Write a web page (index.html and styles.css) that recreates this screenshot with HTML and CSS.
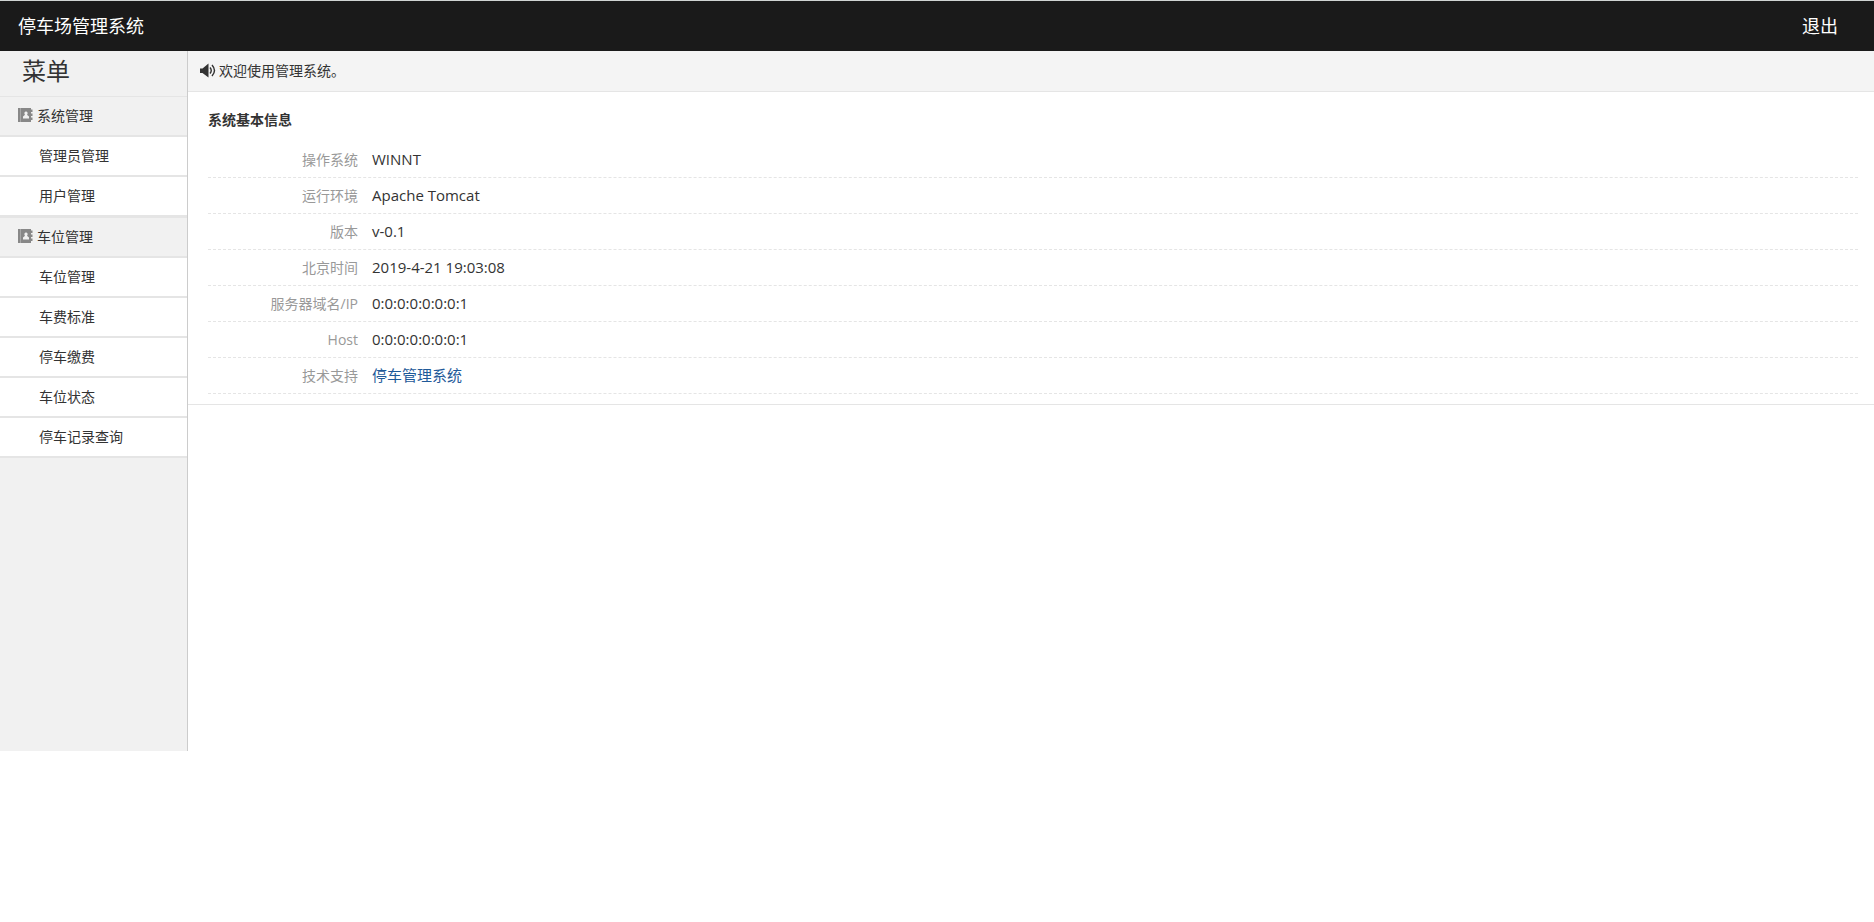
FILE: index.html
```html
<!DOCTYPE html>
<html lang="zh-CN">
<head>
  <meta charset="UTF-8">
  <meta name="viewport" content="width=device-width,initial-scale=1.0">
  <title>停车场管理系统</title>
  <link rel="stylesheet" href="styles.css">
</head>
<body>
    <svg class="sprite">
        <symbol id="icon_book" viewBox="0 0 16 16">
            <path fill-rule="evenodd" d="M1 0h13v1.500h1.500V4H14v1.500h1.500V8H14v1.500h1.500V12H14v2H1zM3.700 0v14h.3V0zM9 3.500a1.600 1.600 0 0 0-1.200 2.700V7L6 8.500V10.500h6V8.500L10.200 7V6.200A1.600 1.600 0 0 0 9 3.500z"/>
        </symbol>
        <symbol id="icon_sound" viewBox="0 0 16 16">
            <path d="M0 5.500h2.500L8.500.500v14L2.500 10H0z"/>
            <path d="M10 4.500q2.500 3 0 6M12 2q5 5.500 0 11" fill="none" stroke="currentColor" stroke-width="1.400"/>
        </symbol>
    </svg>

    <header class="topbar">
        <div class="logo">停车场管理系统</div>
        <a class="logout" href="#">退出</a>
    </header>

    <div class="container">
        <nav class="sidebar">
            <h1>菜单</h1>
            <div class="group">
                <a class="group-title" href="#"><svg class="icon"><use href="#icon_book"/></svg>系统管理</a>
                <ul>
                    <li><a href="#">管理员管理</a></li>
                    <li><a href="#">用户管理</a></li>
                </ul>
            </div>
            <div class="group">
                <a class="group-title" href="#"><svg class="icon"><use href="#icon_book"/></svg>车位管理</a>
                <ul>
                    <li><a href="#">车位管理</a></li>
                    <li><a href="#">车费标准</a></li>
                    <li><a href="#">停车缴费</a></li>
                    <li><a href="#">车位状态</a></li>
                    <li><a href="#">停车记录查询</a></li>
                </ul>
            </div>
        </nav>

        <main class="main">
            <div class="notice"><svg class="icon"><use href="#icon_sound"/></svg>欢迎使用管理系统。</div>
            <section class="info">
                <h2>系统基本信息</h2>
                <dl>
                    <div class="row"><dt>操作系统</dt><dd>WINNT</dd></div>
                    <div class="row"><dt>运行环境</dt><dd>Apache Tomcat</dd></div>
                    <div class="row"><dt>版本</dt><dd>v-0.1</dd></div>
                    <div class="row"><dt>北京时间</dt><dd>2019-4-21 19:03:08</dd></div>
                    <div class="row"><dt>服务器域名/IP</dt><dd>0:0:0:0:0:0:0:1</dd></div>
                    <div class="row"><dt>Host</dt><dd>0:0:0:0:0:0:0:1</dd></div>
                    <div class="row"><dt>技术支持</dt><dd><a href="#">停车管理系统</a></dd></div>
                </dl>
            </section>
        </main>
    </div>
</body>
</html>
```
FILE: styles.css
```css
* {
    box-sizing: border-box;
}
body {
    margin: 0;
    background: #fff;
    color: #333;
    font-family: "Open Sans", "Noto Sans CJK SC", sans-serif;
    font-size: 14px;
}
h1, h2, ul, dl, dd {
    margin: 0;
    padding: 0;
}
ul {
    list-style: none;
}
a {
    color: #333;
    text-decoration: none;
}
.sprite {
    display: none;
}
.icon {
    width: 16px;
    height: 16px;
    flex: none;
    fill: currentColor;
}

.topbar {
    display: flex;
    justify-content: space-between;
    padding: 0 36px 0 18px;
    border-top: 1px solid #d0d4d3;
    background: #1a1a1a;
    color: #fff;
    font-size: 18px;
    line-height: 50px;
}
.logout {
    color: #fff;
}

.container {
    display: flex;
    align-items: flex-start;
}

/* left menu */
.sidebar {
    width: 188px;
    min-height: 700px;
    flex: none;
    border-right: 1px solid #ccc;
    background: #f1f1f1;
}
.sidebar h1 {
    padding: 0 22px 5px;
    font-size: 24px;
    font-weight: normal;
    line-height: 40px;
}
.group {
    border-top: 1px solid #e5e5e5;
}
.group-title {
    display: flex;
    align-items: center;
    gap: 4px;
    padding-left: 17px;
    border-bottom: 2px solid #e5e5e5;
    line-height: 38px;
}
.group-title .icon {
    color: #888;
}
.group li a {
    display: block;
    padding-left: 39px;
    border-bottom: 2px solid #e5e5e5;
    background: #fff;
    line-height: 38px;
}

.main {
    flex: 1;
}
.notice {
    display: flex;
    align-items: center;
    gap: 3px;
    padding-left: 12px;
    border-bottom: 1px solid #e5e5e5;
    background: #f4f4f4;
    line-height: 40px;
}

/* system info */
.info {
    padding: 12px 16px 10px 20px;
    border-bottom: 1px solid #e5e5e5;
}
.info h2 {
    padding-bottom: 6px;
    font-size: 14px;
    line-height: 32px;
}
.row {
    display: flex;
    border-bottom: 1px dashed #e5e5e5;
    line-height: 35px;
}
.row dt {
    width: 150px;
    color: #999;
    text-align: right;
}
.row dd {
    flex: 1;
    padding-left: 14px;
    font-size: 15px;
}
.row dd a {
    color: #1f5a99;
}
```
